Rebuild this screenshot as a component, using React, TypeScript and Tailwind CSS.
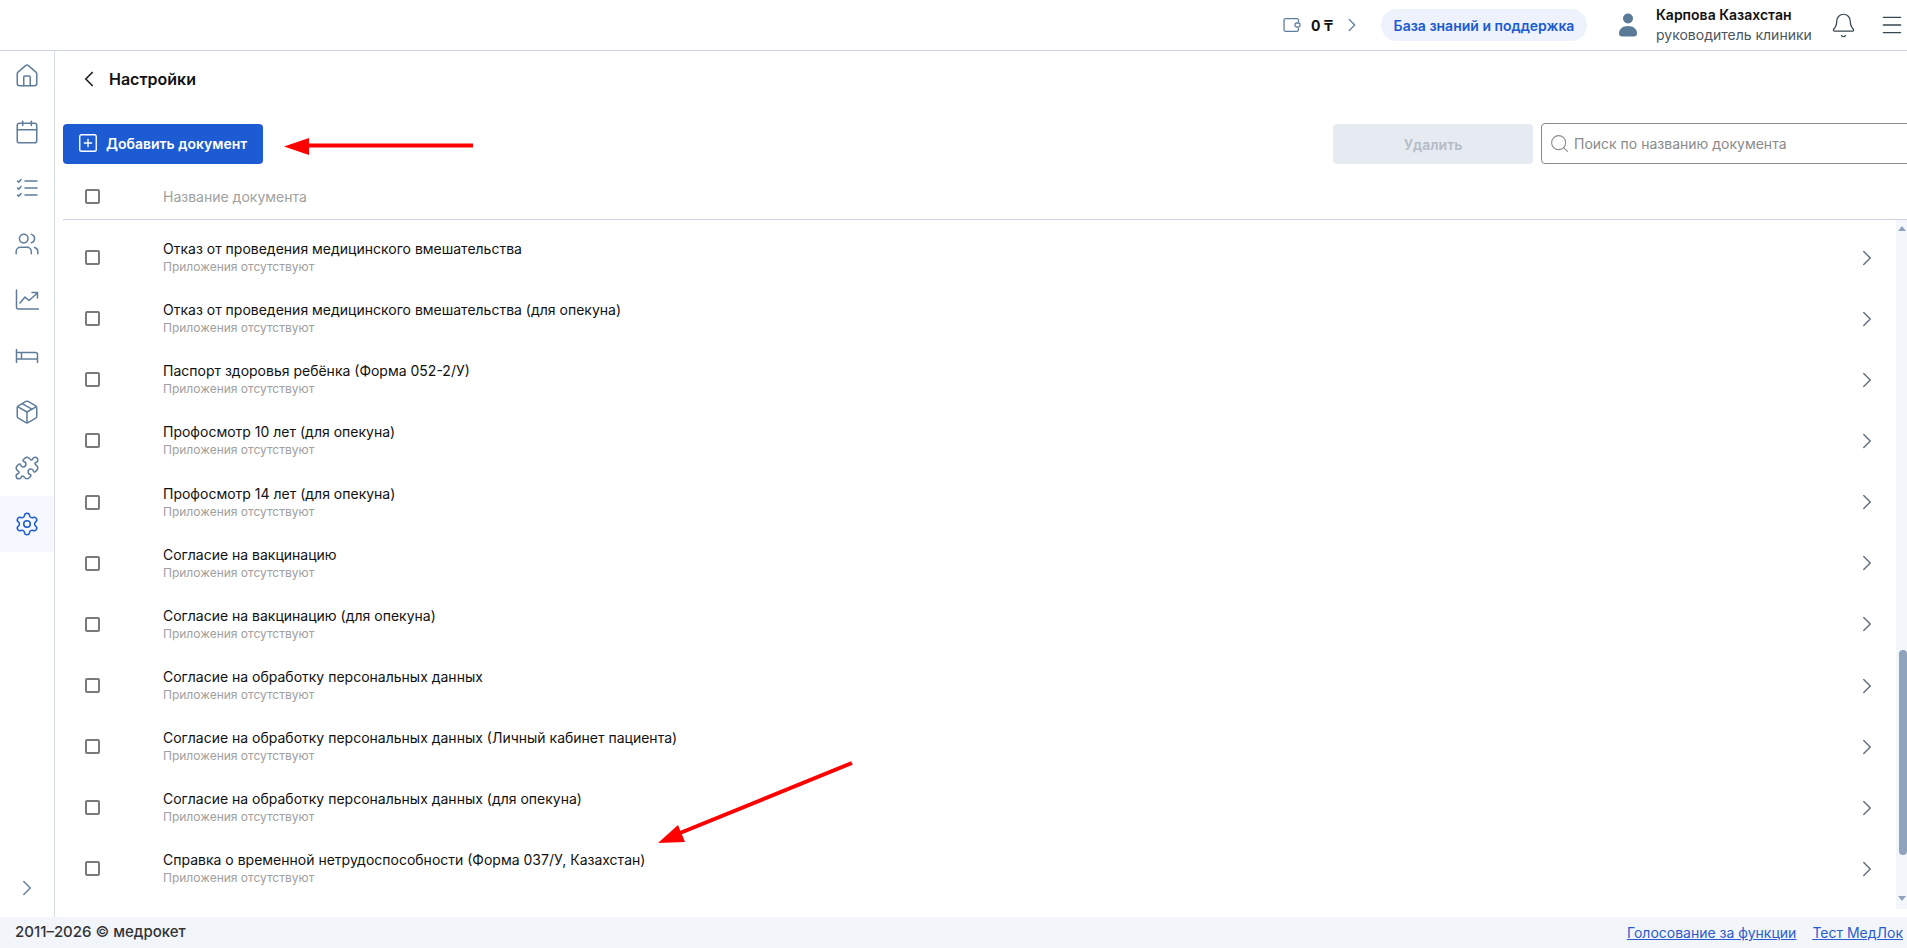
import React from "react";
import { Calendar, ChevronLeft, ChevronRight, House, Package, Puzzle, Search, Settings, SquarePlus, Users, Bell, Menu } from "lucide-react";

const font = { fontFamily: "Inter, 'Noto Sans', sans-serif" };

const docs = [
  "Отказ от проведения медицинского вмешательства",
  "Отказ от проведения медицинского вмешательства (для опекуна)",
  "Паспорт здоровья ребёнка (Форма 052-2/У)",
  "Профосмотр 10 лет (для опекуна)",
  "Профосмотр 14 лет (для опекуна)",
  "Согласие на вакцинацию",
  "Согласие на вакцинацию (для опекуна)",
  "Согласие на обработку персональных данных",
  "Согласие на обработку персональных данных (Личный кабинет пациента)",
  "Согласие на обработку персональных данных (для опекуна)",
  "Справка о временной нетрудоспособности (Форма 037/У, Казахстан)",
];

function ListIcon() {
  return (
    <svg width="24" height="24" viewBox="0 0 24 24" fill="none" stroke="currentColor" strokeWidth="1.5" strokeLinecap="round" strokeLinejoin="round">
      <path d="M10 5h12M10 12h12M10 19h12" />
      <path d="M2.500 5l1.200 1.200L6 3.500M2.500 12l1.200 1.200L6 10.500M2.500 19l1.200 1.200L6 17.500" />
    </svg>
  );
}
function ChartIcon() {
  return (
    <svg width="24" height="24" viewBox="0 0 24 24" fill="none" stroke="currentColor" strokeWidth="1.5" strokeLinecap="round" strokeLinejoin="round">
      <path d="M1.500 2v17a2 2 0 0 0 2 2h20" />
      <path d="M5 15l5-6 4 3.500L22.500 5M17 4.500h5.500V10" />
    </svg>
  );
}
function BedIcon() {
  return (
    <svg width="24" height="24" viewBox="0 0 24 24" fill="none" stroke="currentColor" strokeWidth="1.5" strokeLinejoin="round">
      <path d="M1.500 5v14M1.500 8.500h19a2 2 0 0 1 2 2V19M1.500 15h21M6.500 8.500V15" />
    </svg>
  );
}
function WalletIcon() {
  return (
    <svg width="18" height="16" viewBox="0 0 18 16" fill="none" stroke="#5f7d9b" strokeWidth="1.300" className="shrink-0">
      <path d="M15.500 5V3.200a1.500 1.500 0 0 0-1.500-1.500H2.500A1.500 1.500 0 0 0 1 3.200v9.600a1.500 1.500 0 0 0 1.500 1.500H14a1.500 1.500 0 0 0 1.500-1.500V11" />
      <rect x="12" y="6" width="5" height="4" rx="1.500" />
    </svg>
  );
}
function PersonIcon() {
  return (
    <svg width="20" height="24" viewBox="0 0 20 24" fill="#5b7a97" className="block">
      <circle cx="10" cy="5.500" r="5" />
      <path d="M1 20.500c0-4.800 4-7.500 9-7.500s9 2.700 9 7.500c0 1.800-1.200 3-3 3H4c-1.800 0-3-1.200-3-3z" />
    </svg>
  );
}
function Checkbox() {
  return <span className="block w-[15px] h-[15px] rounded-[2px] border-2 border-[#7a7a7a] bg-white shrink-0" />;
}

const nav = [
  <House size={26} strokeWidth={1.4} />,
  <Calendar size={26} strokeWidth={1.4} />,
  <ListIcon />,
  <Users size={26} strokeWidth={1.4} />,
  <ChartIcon />,
  <BedIcon />,
  <Package size={26} strokeWidth={1.4} />,
  <Puzzle size={26} strokeWidth={1.4} />,
  <Settings size={26} strokeWidth={1.4} />,
];

export default function App() {
  return (
    <div className="relative h-screen w-full flex flex-col overflow-hidden bg-white text-[#111]" style={font}>
      <header className="h-[51px] shrink-0 border-b border-[#ccd3df] flex items-center justify-end whitespace-nowrap">
        <WalletIcon />
        <span className="ml-[10px] text-[14px] font-bold w-[30px] shrink-0">0 ₸</span>
        <ChevronRight size={22} strokeWidth={1.3} className="text-[#5f7d9b] shrink-0" />
        <span className="ml-[18px] h-[32px] w-[206px] shrink-0 rounded-full bg-[#edf2fc] flex items-center justify-center text-[14px] font-semibold text-[#1c5bd1]">База знаний и поддержка</span>
        <span className="ml-[31px] shrink-0"><PersonIcon /></span>
        <div className="ml-[18px] w-[174px] shrink-0 flex flex-col">
          <span className="text-[14px] font-semibold leading-[20px]">Карпова Казахстан</span>
          <span className="text-[14px] leading-[20px] text-[#4a5560]">руководитель клиники</span>
        </div>
        <Bell size={27} strokeWidth={1.1} className="text-[#37474f] shrink-0" />
        <Menu size={26} strokeWidth={1.2} className="ml-[22px] mr-[2px] text-[#37474f] shrink-0" />
      </header>

      <div className="flex-1 flex min-h-0">
        <aside className="w-[55px] shrink-0 border-r border-[#d5dae3] flex flex-col">
          <div className="-mt-[3px] flex-1 flex flex-col">
            {nav.map((icon, i) => (
              <div key={i} className={`h-[56px] flex items-center justify-center ${i === 8 ? "bg-[#f5f8fe] text-[#1c5bd1]" : "text-[#5f7d9b]"}`}>
                {icon}
              </div>
            ))}
          </div>
          <div className="h-[50px] pb-[8px] flex items-center justify-center text-[#5f7d9b]">
            <ChevronRight size={26} strokeWidth={1.3} />
          </div>
        </aside>

        <main className="flex-1 min-w-0 flex flex-col pl-[8px]">
          <div className="h-[56px] shrink-0 flex items-center pl-[13px] pb-[1px]">
            <ChevronLeft size={26} strokeWidth={1.6} className="text-[#222]" />
            <h1 className="ml-[7px] text-[16px] font-semibold">Настройки</h1>
          </div>
          <div className="h-[40px] mt-[17px] shrink-0 flex">
            <button className="w-[200px] h-[40px] rounded-[4px] bg-[#1c5bd1] text-white text-[14px] font-semibold flex items-center pl-[14px] pb-[2px] gap-[7px]">
              <SquarePlus size={22} strokeWidth={1.5} />
              Добавить документ
            </button>
            <div className="flex-1" />
            <button className="w-[200px] h-[40px] rounded-[4px] bg-[#e6eaf1] text-[#b5bcc8] text-[14px] font-semibold">Удалить</button>
            <div className="ml-[8px] w-[400px] -mr-[34px] h-[41px] -mt-[1px] rounded-[4px] border border-[#8a8a8a] flex items-center pl-[7px] gap-[4px] text-[14px] text-[#8a8a8a] shrink-0">
              <Search size={21} strokeWidth={1.2} />
              Поиск по названию документа
            </div>
          </div>
          <div className="h-[56px] pt-[9px] shrink-0 border-b border-[#ccd3df] flex items-center pl-[22px] text-[14px] text-[#a0a0a0]">
            <Checkbox />
            <span className="ml-[63px]">Название документа</span>
          </div>
          <div className="flex-1 min-h-0 flex">
            <div className="flex-1 min-w-0 pt-[7px] overflow-hidden">
              {docs.map((d) => (
                <div key={d} className="h-[61.15px] flex items-center pl-[22px]">
                  <Checkbox />
                  <div className="ml-[63px] flex-1 flex flex-col">
                    <span className="text-[14px] leading-[18px]">{d}</span>
                    <span className="text-[12px] leading-[17px] text-[#a0a0a0]">Приложения отсутствуют</span>
                  </div>
                  <ChevronRight size={26} strokeWidth={1.3} className="text-[#5f6e7d] mr-[16px]" />
                </div>
              ))}
            </div>
            <div className="w-[11px] shrink-0 mb-[8px] bg-[#f3f6fb] flex flex-col items-end">
              <div className="mt-[6px] mr-[1px] w-0 h-0 border-x-[4px] border-x-transparent border-b-[5px] border-b-[#8fa3bd]" />
              <div className="mt-[419px] w-[8px] h-[205px] rounded-[4px] bg-[#8fa3bd]" />
              <div className="mt-[41px] mr-[1px] w-0 h-0 border-x-[4px] border-x-transparent border-t-[5px] border-t-[#8fa3bd]" />
            </div>
          </div>
        </main>
      </div>

      <footer className="h-[31px] shrink-0 bg-[#f2f5fa] flex items-center justify-between pl-[15px] pr-[4px] text-[14px]">
        <span className="text-[15px] font-medium text-[#333]">2011–2026 © медрокет</span>
        <div className="flex gap-[16px] text-[#2a5cd0] underline">
          <a>Голосование за функции</a>
          <a>Тест МедЛок</a>
        </div>
      </footer>

      <svg className="absolute left-0 top-0 pointer-events-none" width="1907" height="948">
        <path d="M309 145.500 L473 145.500" stroke="#ff0000" strokeWidth="4" />
        <polygon points="284,146.500 309,138 309,155" fill="#ff0000" />
        <path d="M852 763 L680 833" stroke="#ff0000" strokeWidth="4" />
        <polygon points="658,843 678,825 685,842" fill="#ff0000" />
      </svg>
    </div>
  );
}
